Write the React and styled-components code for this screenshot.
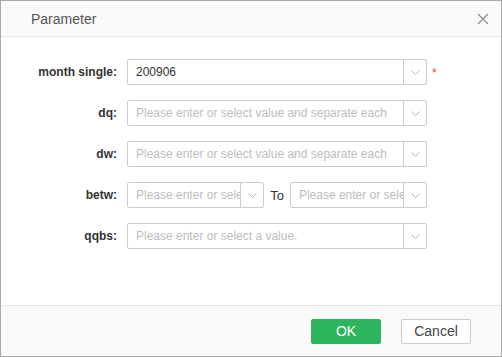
import styled, { createGlobalStyle } from 'styled-components';

const GlobalStyle = createGlobalStyle`
    html, body {
        margin: 0;
        padding: 0;
        background: #fff;
    }
    * {
        box-sizing: border-box;
    }
`;

const Dialog = styled.div`
    width: 502px;
    height: 357px;
    display: flex;
    flex-direction: column;
    border: 1px solid #a9a9a9;
    background: #fff;
    font-family: "Liberation Sans", Arial, sans-serif;
`;

const Header = styled.div`
    height: 36px;
    flex-shrink: 0;
    display: flex;
    align-items: center;
    justify-content: space-between;
    padding: 0 12px 0 30px;
    background: #fafafa;
    border-bottom: 1px solid #e6e6e6;
    font-size: 14px;
    color: #555;
`;

const CloseBtn = styled.button`
    border: none;
    background: transparent;
    padding: 0;
    width: 12px;
    height: 12px;
    display: flex;
    color: #888;
`;

const Body = styled.div`
    flex: 1;
    padding-top: 22px;
`;

const Row = styled.div`
    display: flex;
    align-items: center;
    height: 26px;
    margin-bottom: 15px;
`;

const Label = styled.div`
    width: 126px;
    padding-right: 10px;
    text-align: right;
    font-size: 12px;
    font-weight: bold;
    color: #333;
`;

const Field = styled.div`
    width: 300px;
    display: flex;
    align-items: center;
    gap: ${p => p.$gap || 0}px;
`;

const Select = styled.div`
    flex: 1;
    min-width: 0;
    height: 26px;
    display: flex;
    border: 1px solid #cccccc;
    border-radius: 2px;
    background: #fff;
`;

const Value = styled.div`
    flex: 1;
    min-width: 0;
    padding-left: 8px;
    display: flex;
    align-items: center;
    font-size: 12px;
    color: ${p => (p.$placeholder ? '#bdbdbd' : '#333')};
    white-space: nowrap;
    overflow: hidden;
`;

const Arrow = styled.div`
    width: 23px;
    flex-shrink: 0;
    border-left: 1px solid #cccccc;
    display: flex;
    align-items: center;
    justify-content: center;
    color: #b5b5b5;
`;

const To = styled.span`
    font-size: 13px;
    color: #333;
`;

const Required = styled.span`
    margin-left: 5px;
    color: #f04848;
    font-size: 12px;
    align-self: flex-start;
    margin-top: 7px;
`;

const Footer = styled.div`
    height: 51px;
    flex-shrink: 0;
    display: flex;
    align-items: center;
    justify-content: flex-end;
    gap: 20px;
    padding: 0 30px 0 0;
    background: #fafafa;
    border-top: 1px solid #e6e6e6;
`;

const Button = styled.button`
    width: 70px;
    height: 25px;
    border-radius: 2px;
    font-family: "Liberation Sans", Arial, sans-serif;
    font-size: 14px;
    cursor: pointer;
    border: 1px solid ${p => (p.$primary ? '#2db55d' : '#cccccc')};
    background: ${p => (p.$primary ? '#2db55d' : '#fff')};
    color: ${p => (p.$primary ? '#fff' : '#444')};
`;

const Chevron = () => (
    <svg width="9" height="5" viewBox="0 0 9 5" fill="none">
        <path d="M0.5 0.5 L4.5 4.5 L8.5 0.5" stroke="currentColor" strokeWidth="1" />
    </svg>
);

const SelectBox = ({ value, placeholder }) => (
    <Select>
        <Value $placeholder={!value}>{value || placeholder}</Value>
        <Arrow><Chevron /></Arrow>
    </Select>
);

const multiHint = 'Please enter or select value and separate each';

const App = () => {
    return (
        <>
            <GlobalStyle />
            <Dialog>
                <Header>
                    Parameter
                    <CloseBtn>
                        <svg width="12" height="12" viewBox="0 0 12 12">
                            <path d="M1 1 L11 11 M11 1 L1 11" stroke="currentColor" strokeWidth="1.1" />
                        </svg>
                    </CloseBtn>
                </Header>

                <Body>
                    <Row>
                        <Label>month single:</Label>
                        <Field><SelectBox value="200906" /></Field>
                        <Required>*</Required>
                    </Row>
                    <Row>
                        <Label>dq:</Label>
                        <Field><SelectBox placeholder={multiHint} /></Field>
                    </Row>
                    <Row>
                        <Label>dw:</Label>
                        <Field><SelectBox placeholder={multiHint} /></Field>
                    </Row>
                    <Row>
                        <Label>betw:</Label>
                        <Field $gap={6}>
                            <SelectBox placeholder="Please enter or select a value." />
                            <To>To</To>
                            <SelectBox placeholder="Please enter or select a value." />
                        </Field>
                    </Row>
                    <Row>
                        <Label>qqbs:</Label>
                        <Field><SelectBox placeholder="Please enter or select a value." /></Field>
                    </Row>
                </Body>

                <Footer>
                    <Button $primary>OK</Button>
                    <Button>Cancel</Button>
                </Footer>
            </Dialog>
        </>
    );
};

export default App;
